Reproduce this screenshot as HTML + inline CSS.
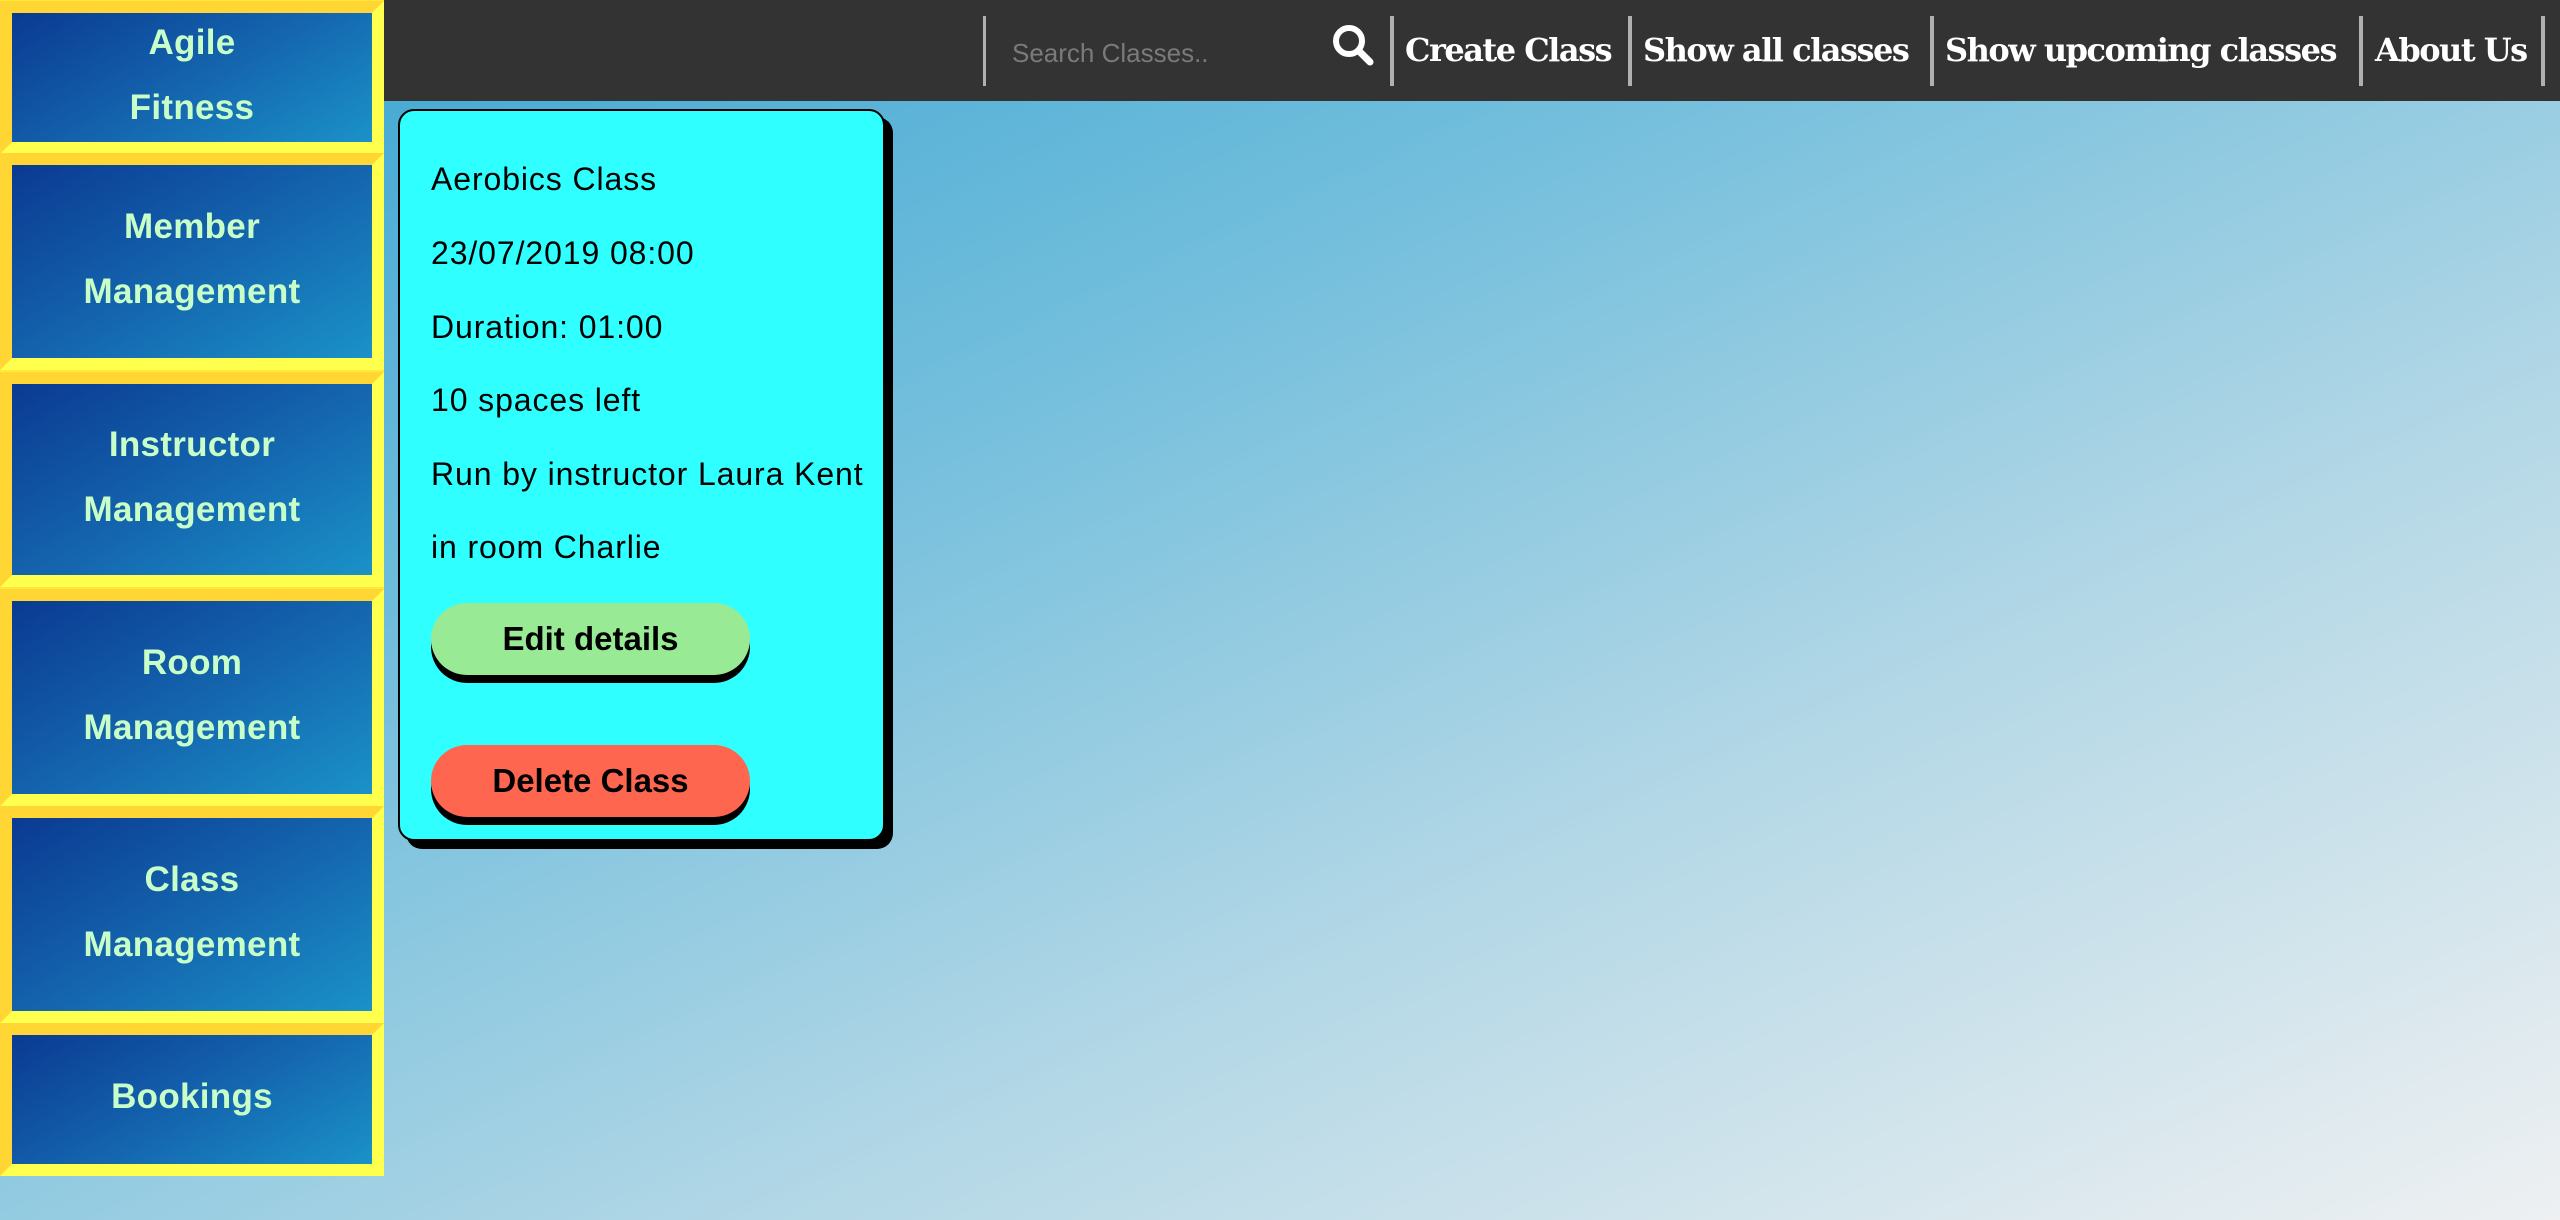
<!DOCTYPE html>
<html><head><meta charset="utf-8"><style>
*{margin:0;padding:0;box-sizing:border-box}
html,body{width:2560px;height:1220px;overflow:hidden}
body{position:relative;background:linear-gradient(155deg,#35a2d0 0%,#72bedc 35%,#b2d7e6 65%,#eef0f2 100%);font-family:"Liberation Sans",sans-serif}
.nav{position:absolute;left:0;top:0;width:2560px;height:101px;background:#333}
.sep{position:absolute;top:16px;height:70px;width:4px;background:#b0b0b0}
.lnk{position:absolute;top:26px;color:#fff;font-family:"DejaVu Serif","Liberation Serif",serif;font-weight:bold;font-size:32px;line-height:48px;white-space:nowrap;letter-spacing:-1.5px}
.ph{position:absolute;left:1012px;top:38px;color:#7a7a7a;font-size:26px}
.side{position:absolute;left:0;top:0;width:384px;height:1176px;background:#ffe83a}
.item{position:absolute;left:0;width:384px;border:12px solid #ffe83a;border-top-color:#ffd633;border-left-color:#ffd633;border-bottom-color:#ffff4d;border-right-color:#ffff4d;display:flex;align-items:center;justify-content:center;text-align:center}
.item div{width:100%;height:100%;padding-bottom:6px;background:linear-gradient(150deg,#0a3a92 0%,#1463ad 50%,#1a92c8 100%);display:flex;align-items:center;justify-content:center;color:#c8ffc8;font-weight:bold;font-size:35px;line-height:65px;letter-spacing:0.3px}
.card{position:absolute;left:398px;top:109px;width:487px;height:732px;background:#2fffff;border:2px solid #000;border-radius:16px;box-shadow:8px 8px 0 #000}
.t{position:absolute;left:31px;font-size:32px;color:#000;white-space:nowrap;letter-spacing:0.9px}
.btn{position:absolute;left:31px;width:319px;height:72px;border-radius:36px;box-shadow:0 8px 0 #000;display:flex;align-items:center;justify-content:center;font-family:"Liberation Sans Narrow","Liberation Sans",sans-serif;font-weight:bold;font-size:33px;color:#000}
</style></head><body>
<div class="nav">
  <div class="sep" style="left:983px;width:3px"></div>
  <div class="ph">Search Classes..</div>
  <svg style="position:absolute;left:1330px;top:22px" width="46" height="46" viewBox="0 0 46 46"><circle cx="19" cy="19" r="13" fill="none" stroke="#fff" stroke-width="6"/><line x1="29" y1="29" x2="40" y2="40" stroke="#fff" stroke-width="7" stroke-linecap="round"/></svg>
  <div class="sep" style="left:1390px"></div>
  <div class="lnk" style="left:1405px">Create Class</div>
  <div class="sep" style="left:1628px"></div>
  <div class="lnk" style="left:1643px">Show all classes</div>
  <div class="sep" style="left:1930px"></div>
  <div class="lnk" style="left:1945px">Show upcoming classes</div>
  <div class="sep" style="left:2359px"></div>
  <div class="lnk" style="left:2375px">About Us</div>
  <div class="sep" style="left:2541px"></div>
</div>
<div class="side">
  <div class="item" style="top:1px;height:153px"><div>Agile<br>Fitness</div></div>
  <div class="item" style="top:153px;height:217px"><div>Member<br>Management</div></div>
  <div class="item" style="top:372px;height:215px"><div>Instructor<br>Management</div></div>
  <div class="item" style="top:589px;height:217px"><div>Room<br>Management</div></div>
  <div class="item" style="top:806px;height:217px"><div>Class<br>Management</div></div>
  <div class="item" style="top:1023px;height:153px"><div>Bookings</div></div>
</div>
<div class="card">
  <div class="t" style="top:50px">Aerobics Class</div>
  <div class="t" style="top:124px">23/07/2019 08:00</div>
  <div class="t" style="top:198px">Duration: 01:00</div>
  <div class="t" style="top:271px">10 spaces left</div>
  <div class="t" style="top:345px">Run by instructor Laura Kent</div>
  <div class="t" style="top:418px">in room Charlie</div>
  <div class="btn" style="top:492px;background:#98eb94">Edit details</div>
  <div class="btn" style="top:634px;background:#ff6650">Delete Class</div>
</div>
</body></html>
